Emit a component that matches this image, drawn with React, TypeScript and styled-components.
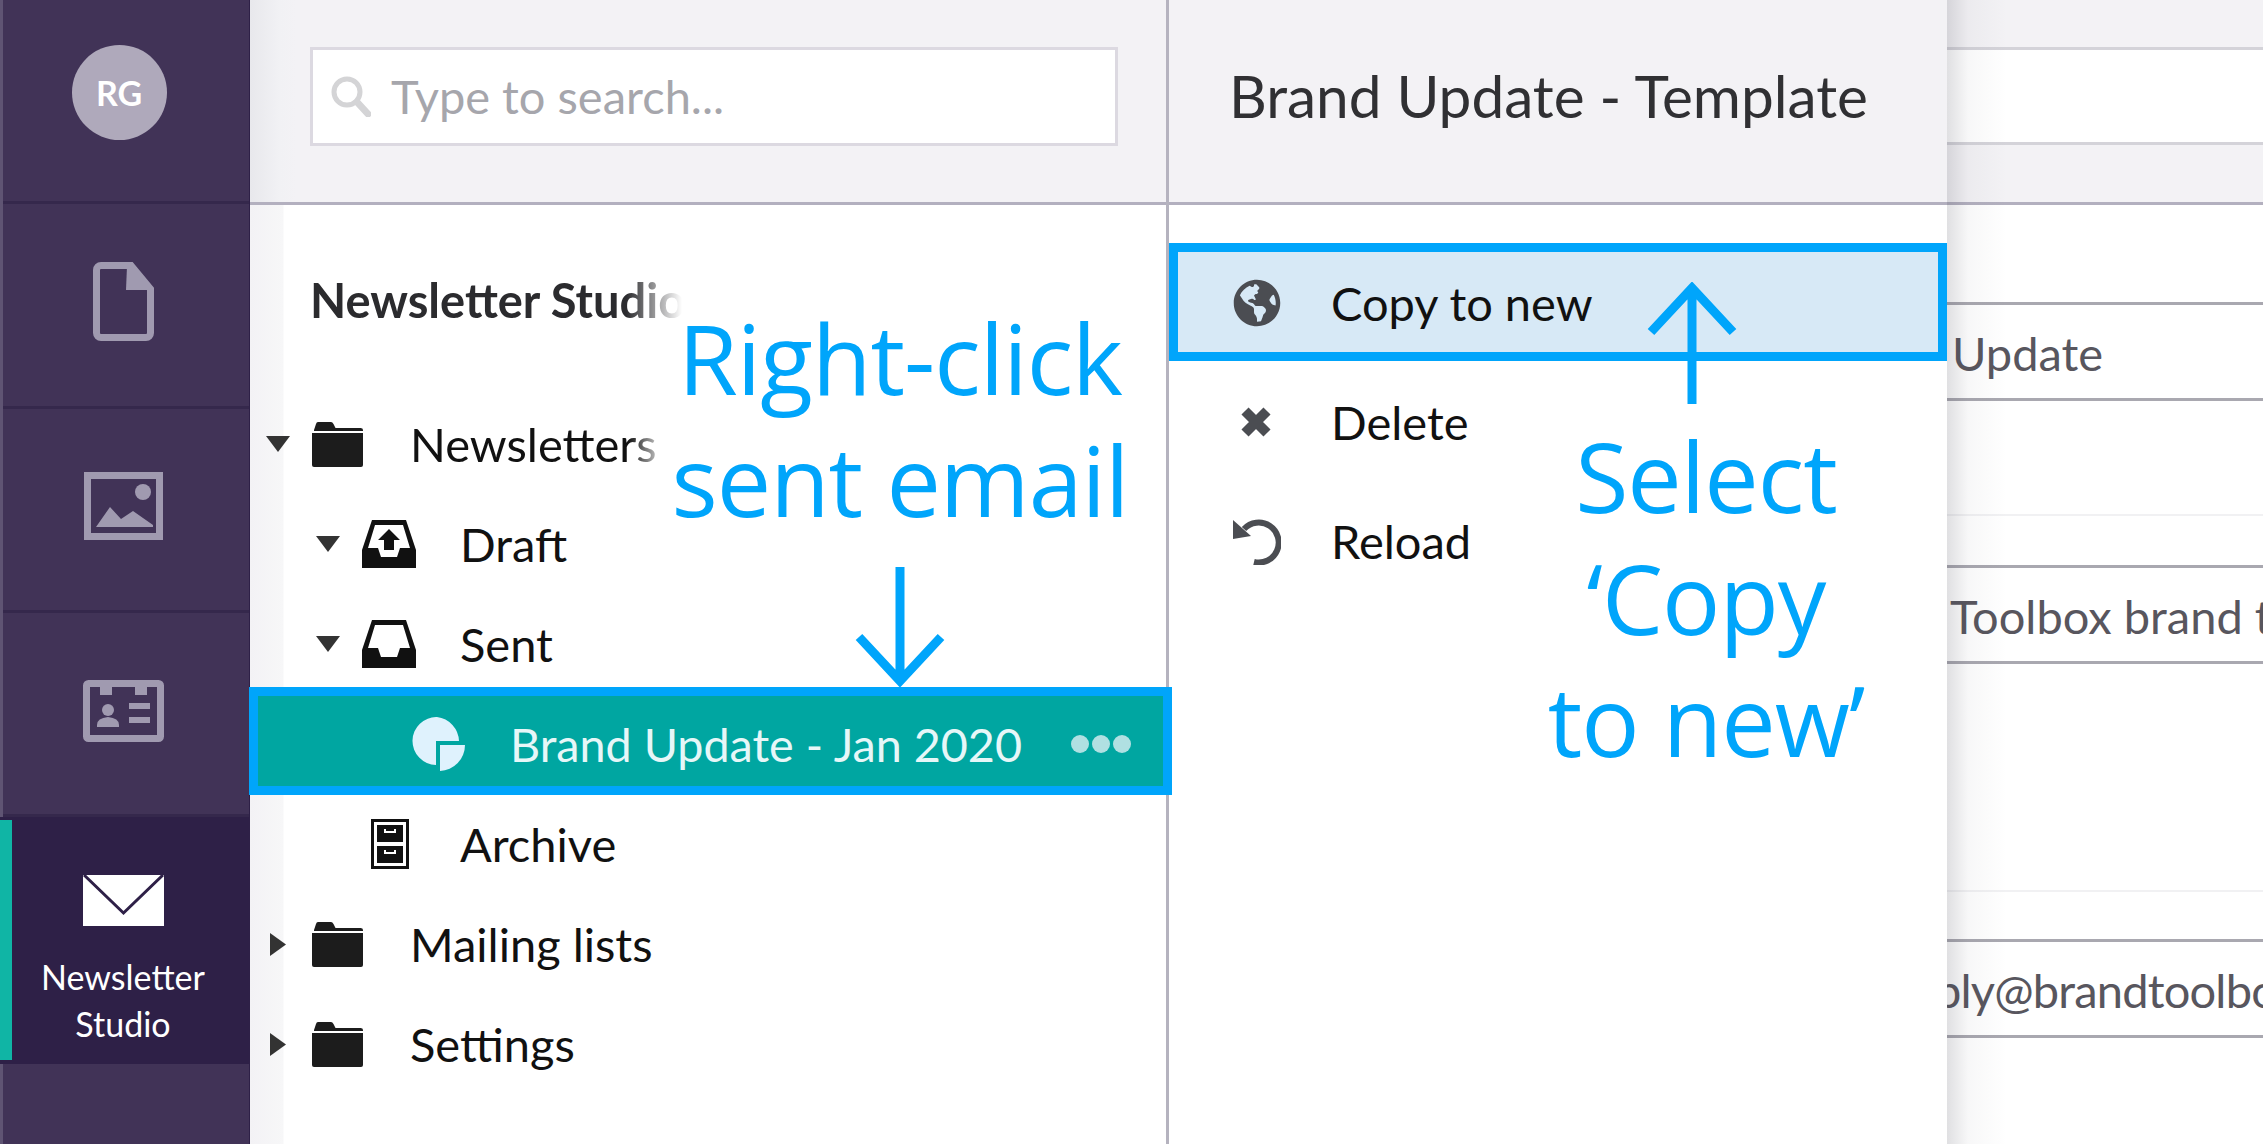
import React from 'react';
import styled, { createGlobalStyle } from 'styled-components';
import { FaGlobeAmericas } from 'react-icons/fa';

const GlobalStyle = createGlobalStyle`
  html, body { margin: 0; padding: 0; background: #fff; }
  * { box-sizing: border-box; }
`;

const Page = styled.div`
  position: relative;
  display: flex;
  width: 2263px;
  height: 1144px;
  overflow: hidden;
  font-family: Lato, "Open Sans", sans-serif;
  color: #111;
`;

const Sidebar = styled.nav`
  display: flex;
  flex-direction: column;
  flex: 0 0 250px;
  background: linear-gradient(90deg, #5f5473 3px, #413357 3px);
  border-right: 1px solid #2e2047;
`;

const SideItem = styled.div`
  display: flex;
  align-items: center;
  justify-content: center;
  height: 204.3px;
  padding: 0 6px 6px 0;
  border-bottom: 3px solid #35284c;
  margin-left: 3px;
  color: #a09ab0;
`;

const Avatar = styled.div`
  display: flex;
  align-items: center;
  justify-content: center;
  width: 95px;
  height: 95px;
  margin: -10px 8px 0 0;
  border-radius: 50%;
  background: #afa9bb;
  color: #fff;
  font-size: 34px;
  font-weight: 700;
`;

const ActiveItem = styled.div`
  position: relative;
  display: flex;
  flex-direction: column;
  align-items: center;
  height: 247px;
  padding: 58px 3px 0 0;
  background: #2e2047;
  color: #fff;
  &::before {
    content: '';
    position: absolute;
    top: 3px;
    bottom: 4px;
    left: 0;
    width: 12px;
    background: #10b5a5;
  }
`;

const ActiveLabel = styled.div`
  margin-top: 27px;
  font-size: 34px;
  line-height: 47px;
  text-align: center;
`;

const TreePane = styled.section`
  flex: 0 0 919px;
  border-right: 3px solid #b5b3bf;
  background: linear-gradient(90deg, #f3f2f5 0, #f7f7f8 33px, #fff 34px);
`;

const PaneHeader = styled.header`
  display: flex;
  align-items: center;
  height: 205px;
  background: #f3f2f5;
  border-bottom: 3px solid #b3b0bf;
`;

const TreeHeader = styled(PaneHeader)`
  padding: 0 46px 10px 60px;
  background: linear-gradient(90deg, #e8e8ec 0, #f1f1f4 30px, #f3f2f5 46px);
`;

const SearchBox = styled.div`
  display: flex;
  align-items: center;
  width: 808px;
  height: 99px;
  padding-left: 18px;
  background: #fff;
  border: 3px solid #dcd9e1;
`;

const SearchText = styled.span`
  margin-left: 20px;
  color: #a6a6ac;
  font-size: 47px;
`;

const TreeTitle = styled.h2`
  width: 372px;
  height: 60px;
  margin: 65px 0 64px 60px;
  font-size: 47px;
  line-height: 60px;
  font-weight: 700;
  white-space: nowrap;
  color: #2b2b2e;
  -webkit-mask-image: linear-gradient(90deg, #000 85%, transparent 100%);
  mask-image: linear-gradient(90deg, #000 85%, transparent 100%);
`;

const Row = styled.div<{ $indent: number }>`
  display: flex;
  align-items: center;
  height: 100px;
  padding-left: ${(p) => p.$indent}px;
  font-size: 47px;
`;

const SelectedRow = styled.div`
  position: relative;
  z-index: 2;
  display: flex;
  align-items: center;
  height: 90px;
  margin: 2px 3px 8px 8px;
  padding: 6px 32px 0 156px;
  outline: 9px solid #00a5fb;
  background: #00a6a1;
  color: #e6f7f8;
  font-size: 46.700px;
`;

const CaretSlot = styled.span`
  display: flex;
  flex: 0 0 46px;
  align-items: center;
`;

const IconSlot = styled.span<{ $width: number }>`
  display: flex;
  flex: 0 0 ${(p) => p.$width}px;
  align-items: center;
`;

const FadedLabel = styled.span`
  width: 248px;
  white-space: nowrap;
  -webkit-mask-image: linear-gradient(90deg, #000 88%, rgba(0, 0, 0, 0.25) 100%);
  mask-image: linear-gradient(90deg, #000 88%, rgba(0, 0, 0, 0.25) 100%);
`;

const Dots = styled.span`
  display: flex;
  gap: 3px;
  margin-left: auto;
`;

const Dot = styled.i`
  width: 18px;
  height: 18px;
  border-radius: 50%;
  background: #b0e0e2;
`;

const ContextPane = styled.section`
  flex: 0 0 778px;
`;

const ContextHeader = styled(PaneHeader)`
  padding: 0 0 12px 60px;
`;

const ContextTitle = styled.h1`
  margin: 0;
  font-size: 58.500px;
  font-weight: 400;
  color: #303033;
`;

const Menu = styled.div`
  display: flex;
  flex-direction: column;
  gap: 19px;
  padding-top: 47px;
`;

const MenuRow = styled.div<{ $active?: boolean }>`
  position: relative;
  display: flex;
  align-items: center;
  height: 100px;
  margin: 0 9px;
  padding: 2px 0 0 55px;
  font-size: 47px;
  color: #111;
  ${(p) => p.$active && 'background: #d7e9f6; outline: 9px solid #00a5fb;'}
`;

const MenuIcon = styled.span`
  display: flex;
  flex: 0 0 98px;
  align-items: center;
  color: #4b4d52;
`;

const FormPane = styled.section`
  position: relative;
  flex: 1;
  overflow: hidden;
  &::before {
    content: '';
    position: absolute;
    z-index: 1;
    top: 0;
    bottom: 0;
    left: 0;
    width: 60px;
    background: linear-gradient(90deg, rgba(60, 60, 75, 0.16) 0, rgba(60, 60, 75, 0.04) 35%, transparent 100%);
  }
`;

const FormHeader = styled(PaneHeader)`
  padding-bottom: 10px;
`;

const FormSearch = styled.div`
  width: 100%;
  height: 98px;
  background: #fff;
  border-top: 3px solid #d4d3d9;
  border-bottom: 3px solid #d4d3d9;
`;

const FormBody = styled.div`
  display: flex;
  flex-direction: column;
`;

const Field = styled.div<{ $top: number }>`
  display: flex;
  align-items: center;
  height: 99px;
  margin-top: ${(p) => p.$top}px;
  padding-top: 2px;
  border-top: 3px solid #a9a8b0;
  border-bottom: 3px solid #a9a8b0;
  color: #58565e;
  font-size: 47px;
  white-space: nowrap;
`;

const FieldText = styled.span<{ $shift: number }>`
  margin-left: ${(p) => p.$shift}px;
`;

const EmailText = styled(FieldText)`
  letter-spacing: -0.800px;
`;

const SoftRule = styled.div<{ $top: number; $after: number }>`
  height: 2px;
  margin-top: ${(p) => p.$top}px;
  margin-bottom: ${(p) => p.$after}px;
  background: #f1f1f3;
`;

const Callout = styled.div<{ $left: number; $top: number; $width: number }>`
  position: absolute;
  z-index: 5;
  left: ${(p) => p.$left}px;
  top: ${(p) => p.$top}px;
  width: ${(p) => p.$width}px;
  font-family: "Open Sans", sans-serif;
  font-weight: 400;
  font-size: 97px;
  letter-spacing: -1px;
  line-height: 122px;
  text-align: center;
  color: #00a5fb;
  white-space: nowrap;
`;

const CalloutArrow = styled.svg<{ $left: number; $top: number }>`
  position: absolute;
  z-index: 5;
  left: ${(p) => p.$left}px;
  top: ${(p) => p.$top}px;
`;

const CaretDown = () => (
  <svg width="24" height="16" viewBox="0 0 24 16"><path d="M0 0h24L12 16z" fill="#333" /></svg>
);

const CaretRight = () => (
  <svg width="16" height="23" viewBox="0 0 16 23" style={{ marginLeft: 4 }}><path d="M0 0l16 11.5L0 23z" fill="#333" /></svg>
);

const FolderIcon = () => (
  <svg width="51" height="45" viewBox="0 0 51 45">
    <path d="M2 8l2-6q.5-2 2-2h13q1.500 0 2.500 2l2 4h25q2.500 0 2.500 2v1H2z" fill="#1c1c1c" />
    <path d="M0 11h51v32q0 2-2 2H2q-2 0-2-2z" fill="#1c1c1c" />
  </svg>
);

const DraftIcon = () => (
  <svg width="54" height="48" viewBox="0 0 54 48">
    <path fillRule="evenodd" fill="#111" d="M10 0h34l10 30v18H0V30zM13 5L6 28h10l3 9h16l3-9h10L41 5z" />
    <path fill="#111" d="M27 9l11 11h-6v10H22V20h-6z" />
  </svg>
);

const SentIcon = () => (
  <svg width="54" height="48" viewBox="0 0 54 48">
    <path fillRule="evenodd" fill="#111" d="M10 0h34l10 30v18H0V30zM13 5L6 28h10l3 9h16l3-9h10L41 5z" />
  </svg>
);

const ArchiveIcon = () => (
  <svg width="38" height="50" viewBox="0 0 38 50" style={{ marginLeft: 9 }}>
    <path fillRule="evenodd" fill="#111" d="M0 0h38v50H0zM3 3v44h32V3z" />
    <path fillRule="evenodd" fill="#111" d="M6 6h26v17H6zM13 10v4h12v-4h-2v2h-8v-2zM6 27h26v17H6zM13 31v4h12v-4h-2v2h-8v-2z" />
  </svg>
);

const PieIcon = () => (
  <svg width="53" height="54" viewBox="0 0 53 54" style={{ marginLeft: -2 }}>
    <path d="M25 0a25 25 0 0 1 22 24H24v24A24 24 0 0 1 25 0z" fill="#dff2fd" />
    <path d="M28 28h25a26 26 0 0 1-25 26z" fill="#dff2fd" />
  </svg>
);

const SearchIcon = () => (
  <svg width="40" height="41" viewBox="0 0 40 41" fill="none">
    <circle cx="16" cy="16" r="13" stroke="#d4d4d6" strokeWidth="5" />
    <path d="M26 26l11 12" stroke="#d4d4d6" strokeWidth="7" strokeLinecap="round" />
  </svg>
);

const DeleteIcon = () => (
  <svg width="32" height="32" viewBox="0 0 32 32" style={{ marginLeft: 7 }}>
    <path d="M5 5l22 22M27 5L5 27" stroke="#4b4d52" strokeWidth="10" fill="none" />
  </svg>
);

const ReloadIcon = () => (
  <svg width="48" height="48" viewBox="0 0 48 48" fill="none">
    <path d="M11 12a20 20 0 1 1 10 33" stroke="#4b4d52" strokeWidth="6" />
    <path d="M0 3l0 19 18-3z" fill="#4b4d52" />
  </svg>
);

const DocIcon = () => (
  <svg width="61" height="79" viewBox="0 0 61 79" fill="none">
    <path d="M8 3.500h30L57.500 27v44a4.500 4.500 0 0 1-4.500 4.500H8A4.500 4.500 0 0 1 3.500 71V8A4.500 4.500 0 0 1 8 3.500z" stroke="currentColor" strokeWidth="7" />
    <path d="M34 4l24 24H33z" fill="currentColor" />
  </svg>
);

const ImageIcon = () => (
  <svg width="79" height="68" viewBox="0 0 79 68" fill="none">
    <rect x="3.500" y="3.500" width="72" height="61" stroke="currentColor" strokeWidth="7" />
    <circle cx="59" cy="20" r="8" fill="currentColor" />
    <path d="M12 55l14-20 11 12 12-8 20 14v2H12z" fill="currentColor" />
  </svg>
);

const CardIcon = () => (
  <svg width="81" height="62" viewBox="0 0 81 62" fill="none">
    <rect x="3.500" y="3.500" width="74" height="55" rx="2" stroke="currentColor" strokeWidth="7" />
    <path d="M17 5h12v10H17zM52 5h12v10H52z" fill="currentColor" />
    <circle cx="25" cy="30" r="6" fill="currentColor" />
    <path d="M14 45q0-7 11-8 11 1 11 8v2H14z" fill="currentColor" />
    <path d="M46 23h21v6H46zM46 37h21v6H46z" fill="currentColor" />
  </svg>
);

const EnvelopeIcon = () => (
  <svg width="81" height="51" viewBox="0 0 81 51">
    <rect width="81" height="51" fill="#fff" />
    <path d="M1 0l39.500 38L80 0" fill="none" stroke="#2e2047" strokeWidth="3" />
  </svg>
);

const App: React.FC = () => (
  <Page>
    <GlobalStyle />
    <Sidebar>
      <SideItem><Avatar>RG</Avatar></SideItem>
      <SideItem><DocIcon /></SideItem>
      <SideItem><ImageIcon /></SideItem>
      <SideItem><CardIcon /></SideItem>
      <ActiveItem>
        <EnvelopeIcon />
        <ActiveLabel>Newsletter<br />Studio</ActiveLabel>
      </ActiveItem>
    </Sidebar>

    <TreePane>
      <TreeHeader>
        <SearchBox>
          <SearchIcon />
          <SearchText>Type to search...</SearchText>
        </SearchBox>
      </TreeHeader>
      <TreeTitle>Newsletter Studio</TreeTitle>
      <Row $indent={16}>
        <CaretSlot><CaretDown /></CaretSlot>
        <IconSlot $width={98}><FolderIcon /></IconSlot>
        <FadedLabel>Newsletters</FadedLabel>
      </Row>
      <Row $indent={66}>
        <CaretSlot><CaretDown /></CaretSlot>
        <IconSlot $width={98}><DraftIcon /></IconSlot>
        <span>Draft</span>
      </Row>
      <Row $indent={66}>
        <CaretSlot><CaretDown /></CaretSlot>
        <IconSlot $width={98}><SentIcon /></IconSlot>
        <span>Sent</span>
      </Row>
      <SelectedRow>
        <IconSlot $width={96}><PieIcon /></IconSlot>
        <span>Brand Update - Jan 2020</span>
        <Dots><Dot /><Dot /><Dot /></Dots>
      </SelectedRow>
      <Row $indent={66}>
        <CaretSlot />
        <IconSlot $width={98}><ArchiveIcon /></IconSlot>
        <span>Archive</span>
      </Row>
      <Row $indent={16}>
        <CaretSlot><CaretRight /></CaretSlot>
        <IconSlot $width={98}><FolderIcon /></IconSlot>
        <span>Mailing lists</span>
      </Row>
      <Row $indent={16}>
        <CaretSlot><CaretRight /></CaretSlot>
        <IconSlot $width={98}><FolderIcon /></IconSlot>
        <span>Settings</span>
      </Row>
    </TreePane>

    <ContextPane>
      <ContextHeader>
        <ContextTitle>Brand Update - Template</ContextTitle>
      </ContextHeader>
      <Menu>
        <MenuRow $active>
          <MenuIcon><FaGlobeAmericas size={48} /></MenuIcon>
          <span>Copy to new</span>
        </MenuRow>
        <MenuRow>
          <MenuIcon><DeleteIcon /></MenuIcon>
          <span>Delete</span>
        </MenuRow>
        <MenuRow>
          <MenuIcon><ReloadIcon /></MenuIcon>
          <span>Reload</span>
        </MenuRow>
      </Menu>
    </ContextPane>

    <FormPane>
      <FormHeader>
        <FormSearch />
      </FormHeader>
      <FormBody>
        <Field $top={97}><FieldText $shift={5}>Update</FieldText></Field>
        <SoftRule $top={113} $after={49} />
        <Field $top={0}><FieldText $shift={3}>Toolbox brand template</FieldText></Field>
        <SoftRule $top={226} $after={47} />
        <Field $top={0}><EmailText $shift={-12}>ply@brandtoolbox.com</EmailText></Field>
      </FormBody>
    </FormPane>

    <Callout $left={650} $top={296} $width={500}>Right-click<br />sent email</Callout>
    <CalloutArrow $left={854} $top={567} width="92" height="120" viewBox="0 0 92 120" fill="none">
      <path d="M46 0v114M5 70l41 44 41-44" stroke="#00a5fb" strokeWidth="9" />
    </CalloutArrow>
    <Callout $left={1456} $top={414} $width={500}>Select<br />‘Copy<br />to new’</Callout>
    <CalloutArrow $left={1647} $top={282} width="92" height="122" viewBox="0 0 92 122" fill="none">
      <path d="M45 122V6M4 50L45 6l41 44" stroke="#00a5fb" strokeWidth="9" />
    </CalloutArrow>
  </Page>
);

export default App;
